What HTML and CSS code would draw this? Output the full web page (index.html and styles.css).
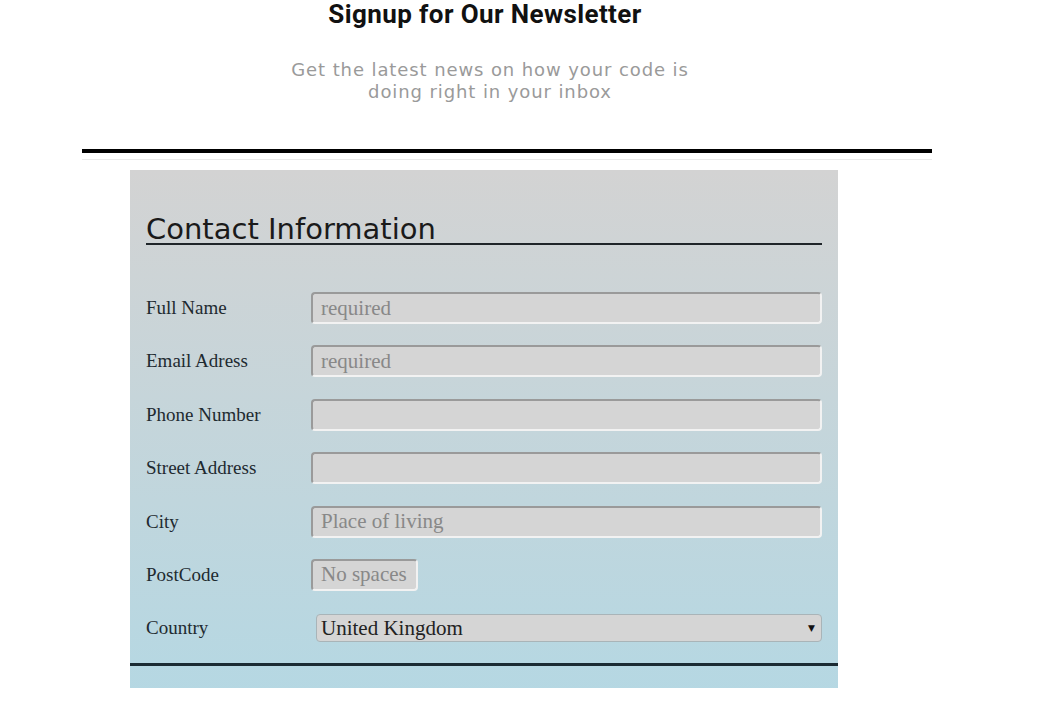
FILE: index.html
```html
<!DOCTYPE html>
<html lang="en">
<head>
<meta charset="utf-8">
<title>Signup for Our Newsletter</title>
<link rel="stylesheet" href="styles.css">
</head>
<body>
<header class="intro">
  <h1 class="intro-title">Signup for Our Newsletter</h1>
  <p class="intro-text">Get the latest news on how your code is<br>doing right in your inbox</p>
</header>
<div class="divider"></div>
<div class="panel-clip">
  <form class="panel">
    <h2 class="section-title">Contact Information</h2>
    <div class="fields">
      <div class="row"><label class="label" for="f-name">Full Name</label><input class="field" id="f-name" type="text" placeholder="required"></div>
      <div class="row"><label class="label" for="f-email">Email Adress</label><input class="field" id="f-email" type="email" placeholder="required"></div>
      <div class="row"><label class="label" for="f-phone">Phone Number</label><input class="field" id="f-phone" type="tel"></div>
      <div class="row"><label class="label" for="f-street">Street Address</label><input class="field" id="f-street" type="text"></div>
      <div class="row"><label class="label" for="f-city">City</label><input class="field" id="f-city" type="text" placeholder="Place of living"></div>
      <div class="row"><label class="label" for="f-post">PostCode</label><input class="field field-short" id="f-post" type="text" placeholder="No spaces"></div>
      <div class="row"><label class="label" for="f-country">Country</label>
        <div class="select">
          <span class="select-value">United Kingdom</span>
          <span class="select-arrow">&#9660;</span>
        </div>
      </div>
    </div>
    <div class="section-break"></div>
  </form>
</div>
</body>
</html>
```

FILE: styles.css
```css
* { box-sizing: border-box; }

body {
  margin: 0;
  background: #ffffff;
  font-family: "Liberation Serif", serif;
}

.intro {
  width: 970px;
  text-align: center;
}

.intro-title {
  margin: 0;
  font-family: Roboto, "Liberation Sans", sans-serif;
  font-weight: 700;
  font-size: 26px;
  letter-spacing: 0.4px;
  line-height: 28px;
  color: #111111;
}

.intro-text {
  margin: 31px 0 0 10px;
  font-family: "DejaVu Sans", sans-serif;
  font-size: 18px;
  letter-spacing: 0.9px;
  line-height: 22px;
  color: #9a9a9a;
}

.divider {
  margin: 46px 0 0 82px;
  width: 850px;
  height: 11px;
  border-top: 4px solid #000000;
  border-bottom: 1px solid #e9e9e9;
}

.panel-clip {
  margin: 10px 0 0 130px;
  width: 708px;
  height: 518px;
  overflow: hidden;
}

.panel {
  background: linear-gradient(180deg, #d3d3d3 0%, #b3d8e4 100%);
  height: 560px;
  padding-top: 46px;
}

.section-title {
  margin: 0 16px;
  font-family: "DejaVu Sans", sans-serif;
  font-weight: normal;
  font-size: 29px;
  line-height: 27px;
  color: #1a1a1a;
  border-bottom: 2px solid #1f2529;
}

.fields {
  margin: 47px 16px 0;
  display: flex;
  flex-direction: column;
  gap: 21.4px;
}

.row {
  display: flex;
  align-items: center;
  height: 32px;
}

.label {
  width: 165px;
  flex: none;
  font-size: 19px;
  color: #1e2a30;
}

.field {
  flex: 1;
  height: 32px;
  padding: 0 8px;
  background: #d5d5d5;
  border-style: solid;
  border-width: 2px;
  border-color: #9a9a9a #f2f2f2 #f2f2f2 #9a9a9a;
  border-radius: 4px;
  font-family: "Liberation Serif", serif;
  font-size: 21px;
  color: #222222;
  outline: none;
}

.field::placeholder { color: #888888; }

.field-short {
  flex: none;
  width: 107px;
}

.select {
  flex: 1;
  margin-left: 5px;
  height: 28px;
  display: flex;
  align-items: center;
  justify-content: space-between;
  padding: 0 6px 0 4px;
  background: #d5d5d5;
  border: 1px solid #a9b4b8;
  border-radius: 4px;
}

.select-value {
  font-size: 21px;
  color: #222222;
}

.select-arrow {
  font-family: "DejaVu Sans", sans-serif;
  font-size: 9px;
  color: #111111;
}

.section-break {
  margin-top: 19px;
  border-top: 3px solid #1b2b33;
}
```
